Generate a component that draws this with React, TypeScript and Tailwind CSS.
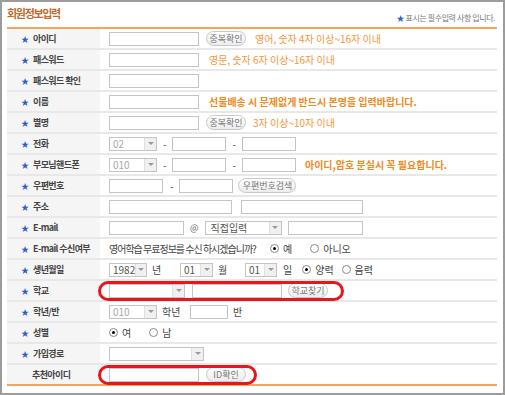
import React from 'react';

const font = { fontFamily: '"Noto Sans CJK KR", "Noto Sans", sans-serif' };

const Input = ({ w }: { w: string }) => (
  <div className={`${w} h-[14px] border border-[#c4c4c4] bg-white shrink-0`} />
);

const Arrow = () => (
  <span className="w-[12px] h-[12px] bg-[#f0f0f0] border-l border-[#e0e0e0] flex items-center justify-center">
    <span className="w-0 h-0 border-l-[3px] border-r-[3px] border-t-[3px] border-l-transparent border-r-transparent border-t-[#9a9a9a]" />
  </span>
);

const Select = ({ w, value = '', dark }: { w: string; value?: string; dark?: boolean }) => (
  <div className={`${w} h-[14px] border border-[#c4c4c4] bg-white flex items-center shrink-0`}>
    <span className={`flex-1 pl-[3px] text-[10px] leading-none ${dark ? 'text-[#555]' : 'text-[#a8a8a8]'}`}>{value}</span>
    <Arrow />
  </div>
);

const Btn = ({ w, children }: { w: string; children: React.ReactNode }) => (
  <div
    className={`${w} h-[15px] rounded-full border border-[#c8c8c8] bg-gradient-to-b from-white to-[#ececec] flex items-center justify-center text-[9px] leading-none text-[#777] shrink-0`}
  >
    {children}
  </div>
);

const Radio = ({ on, label, cls }: { on?: boolean; label: string; cls?: string }) => (
  <div className={`flex items-center gap-[4px] shrink-0 ${cls ?? ''}`}>
    <span className="w-[9px] h-[9px] rounded-full border border-[#888] bg-white flex items-center justify-center">
      {on && <span className="w-[3px] h-[3px] rounded-full bg-black" />}
    </span>
    <span className="text-[10px] leading-none text-[#444]">{label}</span>
  </div>
);

const Txt = ({ cls, children }: { cls: string; children: React.ReactNode }) => (
  <span className={`${cls} text-[10px] leading-none text-[#444] shrink-0`}>{children}</span>
);

const Row = ({
  label,
  star = true,
  last,
  children,
}: {
  label: string;
  star?: boolean;
  last?: boolean;
  children?: React.ReactNode;
}) => (
  <div className={`flex h-[21px] border-b-2 ${last ? 'border-[#f1a55e]' : 'border-[#e8e8e8]'}`}>
    <div className={`w-[93px] bg-[#f5f5f5] flex items-center ${star ? 'pl-[14px]' : 'pl-[25px]'} gap-[4px]`}>
      {star && <span className="text-[8px] leading-none text-[#2a62c9]">★</span>}
      <span className="text-[9px] leading-none font-bold text-[#444] tracking-[-0.6px] whitespace-pre">{label}</span>
    </div>
    <div className="flex-1 relative flex items-center pl-[9px]">{children}</div>
  </div>
);

const Note = ({ children, bold, cls }: { children: React.ReactNode; bold?: boolean; cls: string }) => (
  <span className={`${cls} text-[10px] leading-none whitespace-nowrap ${bold ? 'font-bold text-[#f08a1c]' : 'text-[#f5963a]'}`}>
    {children}
  </span>
);

export default function App() {
  return (
    <div style={font} className="w-[505px] h-[395px] border-2 border-[#9c9c9c] bg-white px-[5px] overflow-hidden">
      <div className="flex items-start justify-between h-[25px] pt-[6px]">
        <span className="text-[11px] leading-none font-bold text-[#bd6a2e] tracking-[-1.3px]">회원정보입력</span>
        <span className="mt-[6px] mr-[3px] text-[8px] leading-none text-[#777] tracking-[-0.4px]">
          <span className="text-[#2a62c9]">★</span> 표시는 필수입력 사항 입니다.
        </span>
      </div>
      <div className="border-t-2 border-[#f1a55e] w-[490px]">
        <Row label="아이디">
          <Input w="w-[90px]" />
          <Btn w="w-[40px] ml-[7px]">중복확인</Btn>
          <Note cls="ml-[9px]">영어, 숫자 4자 이상~16자 이내</Note>
        </Row>
        <Row label="패스워드">
          <Input w="w-[90px]" />
          <Note cls="ml-[10px]">영문, 숫자 6자 이상~16자 이내</Note>
        </Row>
        <Row label="패스워드 확인">
          <Input w="w-[90px]" />
        </Row>
        <Row label="이름">
          <Input w="w-[90px]" />
          <Note bold cls="ml-[10px]">선물배송 시 문제없게 반드시 본명을 입력바랍니다.</Note>
        </Row>
        <Row label="별명">
          <Input w="w-[90px]" />
          <Btn w="w-[40px] ml-[7px]">중복확인</Btn>
          <Note cls="ml-[7px]">3자 이상~10자 이내</Note>
        </Row>
        <Row label="전화">
          <Select w="w-[48px]" value="02" />
          <Txt cls="ml-[6px] mr-[6px]">-</Txt>
          <Input w="w-[54px]" />
          <Txt cls="ml-[6px] mr-[6px]">-</Txt>
          <Input w="w-[54px]" />
        </Row>
        <Row label="부모님핸드폰">
          <Select w="w-[48px]" value="010" />
          <Txt cls="ml-[6px] mr-[6px]">-</Txt>
          <Input w="w-[54px]" />
          <Txt cls="ml-[6px] mr-[6px]">-</Txt>
          <Input w="w-[54px]" />
          <Note bold cls="ml-[9px]">아이디,암호 분실시 꼭 필요합니다.</Note>
        </Row>
        <Row label="우편번호">
          <Input w="w-[54px]" />
          <Txt cls="ml-[7px] mr-[6px]">-</Txt>
          <Input w="w-[54px]" />
          <Btn w="w-[58px] ml-[5px]">우편번호검색</Btn>
        </Row>
        <Row label="주소">
          <Input w="w-[123px]" />
          <div className="w-[9px]" />
          <Input w="w-[122px]" />
        </Row>
        <Row label="E-mail">
          <Input w="w-[75px]" />
          <span className="mx-[6px] text-[9px] leading-none text-[#666]">@</span>
          <div className="w-[77px] h-[14px] border border-[#c4c4c4] bg-white flex items-center shrink-0">
            <span className="flex-1 pl-[5px] text-[10px] leading-none text-[#555]">직접입력</span>
            <Arrow />
          </div>
          <div className="w-[6px]" />
          <Input w="w-[75px]" />
        </Row>
        <Row label="E-mail 수신여부">
          <span className="w-[158px] shrink-0 text-[10px] leading-none text-[#444] whitespace-nowrap tracking-[-1px]">영어학습 무료정보를 수신 하시겠습니까?</span>
          <Radio on label="예" cls="ml-[3px]" />
          <Radio label="아니오" cls="ml-[18px]" />
        </Row>
        <Row label="생년월일">
          <Select w="w-[38px]" value="1982" dark />
          <Txt cls="ml-[5px] w-[28px]">년</Txt>
          <Select w="w-[33px]" value="01" dark />
          <Txt cls="ml-[5px] w-[27px]">월</Txt>
          <Select w="w-[32px]" value="01" dark />
          <Txt cls="ml-[6px]">일</Txt>
          <Radio on label="양력" cls="ml-[10px]" />
          <Radio label="음력" cls="ml-[8px]" />
        </Row>
        <Row label="학교">
          <Select w="w-[76px]" />
          <div className="w-[7px]" />
          <Input w="w-[90px]" />
          <Btn w="w-[40px] ml-[6px]">학교찾기</Btn>
          <div className="absolute left-[-2px] top-[0px] w-[246px] h-[20px] border-[3px] border-[#e8151c] rounded-[10px]" />
        </Row>
        <Row label="학년/반">
          <Select w="w-[48px]" value="010" />
          <Txt cls="ml-[5px] w-[28px]">학년</Txt>
          <Input w="w-[38px]" />
          <Txt cls="ml-[5px]">반</Txt>
        </Row>
        <Row label="성별">
          <Radio on label="여" />
          <Radio label="남" cls="ml-[18px]" />
        </Row>
        <Row label="가입경로">
          <Select w="w-[95px]" />
        </Row>
        <Row label="추천아이디" star={false} last>
          <Input w="w-[90px]" />
          <Btn w="w-[40px] ml-[7px]">ID확인</Btn>
          <div className="absolute left-[-2px] top-[0px] w-[159px] h-[20px] border-[3px] border-[#e8151c] rounded-[10px]" />
        </Row>
      </div>
    </div>
  );
}
